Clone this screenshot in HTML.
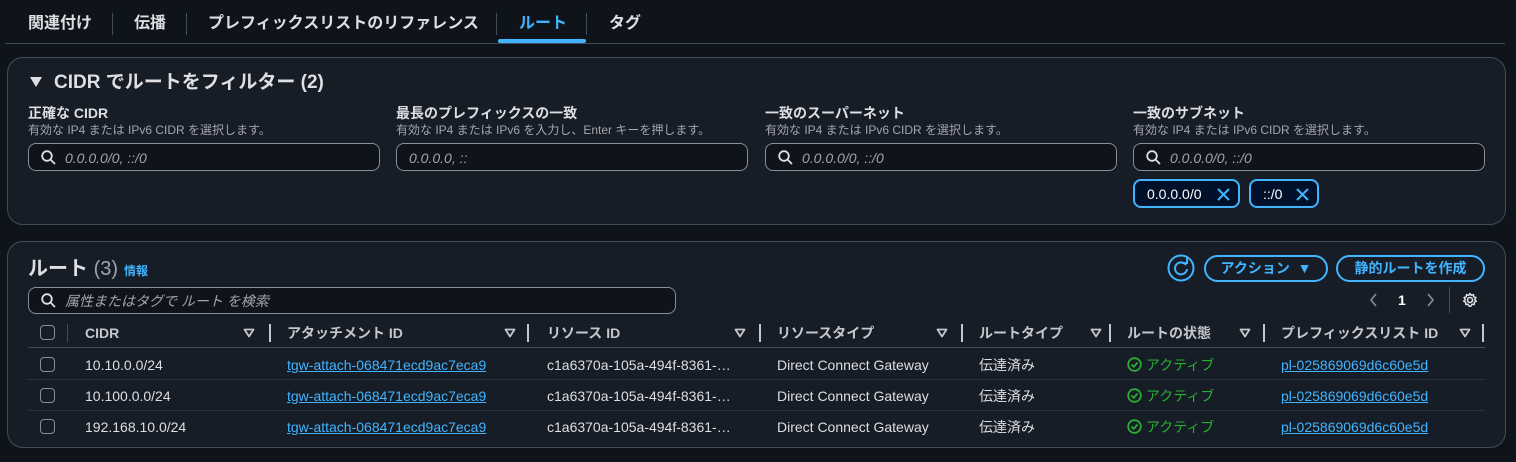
<!DOCTYPE html><html><head><meta charset="utf-8"><style>
*{box-sizing:border-box;margin:0;padding:0}
body{width:1516px;height:462px;background:#0f141a;font-family:"Liberation Sans","Noto Sans CJK JP",sans-serif;color:#dedee3;position:relative;overflow:hidden;font-size:14px;line-height:18px}
.a{position:absolute;white-space:nowrap}
.box{position:absolute;background:#161d26;border:1px solid #414d5c;border-radius:16px}
.lbl{font-weight:bold;font-size:14px;color:#dedee3}
.desc{font-size:12px;color:#a4a4ad;line-height:14px}
.inp{position:absolute;height:28px;border:1px solid #8c8c94;border-radius:8px;background:#0f141a;width:352px}
.ph{position:absolute;top:5px;font-style:italic;color:#a4a4ad;font-size:14px}
.tok{position:absolute;top:179px;height:29px;border:2px solid #42b4ff;border-radius:8px;background:#001129;color:#fff;font-size:14px;padding:4px 12px}
.btn{position:absolute;top:255px;height:27px;border:2px solid #42b4ff;border-radius:14px;color:#42b4ff;font-weight:bold;font-size:14px;text-align:center;line-height:22px}
.th{position:absolute;top:324px;font-weight:bold;color:#c6c6cd;font-size:14px}
.sep{position:absolute;top:324px;width:2px;height:18px;background:#c6c6cd}
.sort{position:absolute;top:328px}
.cb{position:absolute;left:40px;width:15px;height:15px;border:1.5px solid #8c8c94;border-radius:4px}
.td{position:absolute;font-size:14px;color:#dedee3}
.lk{color:#42b4ff;text-decoration:underline}
.ln{position:absolute;left:28px;width:1457px;height:1px;background:#414d5c}
.ok{color:#29ad32}
.tab{top:14px;font-size:16px;font-weight:bold;line-height:20px}
</style></head><body>
<div class="a tab" style="left:28px">関連付け</div>
<div class="a" style="left:112px;top:13px;width:1px;height:22px;background:#414d5c"></div>
<div class="a tab" style="left:134px">伝播</div>
<div class="a" style="left:186px;top:13px;width:1px;height:22px;background:#414d5c"></div>
<div class="a tab" style="left:208px">プレフィックスリストのリファレンス</div>
<div class="a" style="left:496px;top:13px;width:1px;height:22px;background:#414d5c"></div>
<div class="a tab" style="left:519px;color:#42b4ff">ルート</div>
<div class="a" style="left:498px;top:39px;width:88px;height:4px;border-radius:2px;background:#42b4ff"></div>
<div class="a" style="left:586px;top:13px;width:1px;height:22px;background:#414d5c"></div>
<div class="a tab" style="left:609px">タグ</div>
<div class="a" style="left:5px;top:43px;width:1500px;height:1px;background:#414d5c"></div>

<div class="box" style="left:7px;top:57px;width:1499px;height:168px"></div>
<svg class="a" style="left:30px;top:77px" width="12" height="11"><path d="M0 0H12L6 10Z" fill="#dedee3"/></svg>
<div class="a" style="left:54px;top:71px;font-size:19px;font-weight:bold;line-height:24px">CIDR でルートをフィルター (2)</div>

<div class="a lbl" style="left:28px;top:104px">正確な CIDR</div>
<div class="a desc" style="left:28px;top:123px">有効な IP4 または IPv6 CIDR を選択します。</div>
<div class="inp" style="left:28px;top:143px"><svg class="a" style="left:12px;top:6px" width="15" height="15" viewBox="0 0 15 15"><circle cx="6" cy="6" r="4.8" fill="none" stroke="#dedee3" stroke-width="1.8"/><path d="M9.5 9.5L14 14" stroke="#dedee3" stroke-width="1.8"/></svg><span class="ph" style="left:36px">0.0.0.0/0, ::/0</span></div>

<div class="a lbl" style="left:396px;top:104px">最長のプレフィックスの一致</div>
<div class="a desc" style="left:396px;top:123px">有効な IP4 または IPv6 を入力し、Enter キーを押します。</div>
<div class="inp" style="left:396px;top:143px"><span class="ph" style="left:12px">0.0.0.0, ::</span></div>

<div class="a lbl" style="left:765px;top:104px">一致のスーパーネット</div>
<div class="a desc" style="left:765px;top:123px">有効な IP4 または IPv6 CIDR を選択します。</div>
<div class="inp" style="left:765px;top:143px"><svg class="a" style="left:12px;top:6px" width="15" height="15" viewBox="0 0 15 15"><circle cx="6" cy="6" r="4.8" fill="none" stroke="#dedee3" stroke-width="1.8"/><path d="M9.5 9.5L14 14" stroke="#dedee3" stroke-width="1.8"/></svg><span class="ph" style="left:36px">0.0.0.0/0, ::/0</span></div>

<div class="a lbl" style="left:1133px;top:104px">一致のサブネット</div>
<div class="a desc" style="left:1133px;top:123px">有効な IP4 または IPv6 CIDR を選択します。</div>
<div class="inp" style="left:1133px;top:143px"><svg class="a" style="left:12px;top:6px" width="15" height="15" viewBox="0 0 15 15"><circle cx="6" cy="6" r="4.8" fill="none" stroke="#dedee3" stroke-width="1.8"/><path d="M9.5 9.5L14 14" stroke="#dedee3" stroke-width="1.8"/></svg><span class="ph" style="left:36px">0.0.0.0/0, ::/0</span></div>
<div class="tok" style="left:1133px;width:107px">0.0.0.0/0<svg class="a" style="left:82px;top:7px" width="13" height="13" viewBox="0 0 13 13"><path d="M1 1L12 12M12 1L1 12" stroke="#42b4ff" stroke-width="2"/></svg></div>
<div class="tok" style="left:1249px;width:70px">::/0<svg class="a" style="left:45px;top:7px" width="13" height="13" viewBox="0 0 13 13"><path d="M1 1L12 12M12 1L1 12" stroke="#42b4ff" stroke-width="2"/></svg></div>

<div class="box" style="left:7px;top:241px;width:1499px;height:207px"></div>
<div class="a" style="left:28px;top:256px;font-size:20px;font-weight:bold;line-height:26px">ルート <span style="color:#a4a4ad;font-weight:normal">(3)</span></div>
<div class="a" style="left:124px;top:262px;font-size:12px;font-weight:bold;color:#42b4ff">情報</div>
<div class="inp" style="left:28px;top:287px;width:648px;height:27px"><svg class="a" style="left:12px;top:5px" width="15" height="15" viewBox="0 0 15 15"><circle cx="6" cy="6" r="4.8" fill="none" stroke="#dedee3" stroke-width="1.8"/><path d="M9.5 9.5L14 14" stroke="#dedee3" stroke-width="1.8"/></svg><span class="ph" style="left:36px;top:4px">属性またはタグで ルート を検索</span></div>

<svg class="a" style="left:1167px;top:254px" width="28" height="28" viewBox="0 0 28 28"><circle cx="14" cy="14" r="12.5" fill="none" stroke="#42b4ff" stroke-width="2"/><path d="M19 11A6 6 0 1 0 20 15" fill="none" stroke="#42b4ff" stroke-width="2"/><path d="M15 9L20 9L20 4" fill="none" stroke="#42b4ff" stroke-width="2"/></svg>
<div class="btn" style="left:1204px;width:124px">アクション&nbsp;&nbsp;▼</div>
<div class="btn" style="left:1336px;width:149px">静的ルートを作成</div>
<svg class="a" style="left:1369px;top:293px" width="10" height="14"><path d="M7 1L2 7L7 13" fill="none" stroke="#8c8c94" stroke-width="1.6"/></svg>
<div class="a" style="left:1398px;top:291px;font-weight:bold;color:#fff">1</div>
<svg class="a" style="left:1425px;top:293px" width="10" height="14"><path d="M3 1L8 7L3 13" fill="none" stroke="#8c8c94" stroke-width="1.6"/></svg>
<div class="a" style="left:1449px;top:287px;width:1px;height:26px;background:#414d5c"></div>
<svg class="a" style="left:1462px;top:292px" width="16" height="16" viewBox="0 0 16 16"><circle cx="8" cy="8" r="2.5" fill="none" stroke="#dedee3" stroke-width="1.6"/><path d="M8 1.5L9.3 3.3L11.5 2.6L11.7 4.8L13.9 5.5L12.8 7.5L14.3 9.2L12.3 10.2L12.3 12.5L10 12.3L8.8 14.3L7.2 14.3L6 12.3L3.7 12.5L3.7 10.2L1.7 9.2L3.2 7.5L2.1 5.5L4.3 4.8L4.5 2.6L6.7 3.3Z" fill="none" stroke="#dedee3" stroke-width="1.5" stroke-linejoin="round"/></svg>

<div class="cb" style="top:325px"></div>
<div class="a" style="left:67px;top:324px;width:1px;height:18px;background:#414d5c"></div>
<div class="th" style="left:85px">CIDR</div>
<div class="th" style="left:287px">アタッチメント ID</div>
<div class="th" style="left:547px">リソース ID</div>
<div class="th" style="left:777px">リソースタイプ</div>
<div class="th" style="left:979px">ルートタイプ</div>
<div class="th" style="left:1127px">ルートの状態</div>
<div class="th" style="left:1281px">プレフィックスリスト ID</div>
<div class="sep" style="left:269px"></div><div class="sep" style="left:527px"></div><div class="sep" style="left:759px"></div><div class="sep" style="left:961px"></div><div class="sep" style="left:1109px"></div><div class="sep" style="left:1263px"></div><div class="sep" style="left:1482px"></div>
<svg class="sort" style="left:243px" width="12" height="10"><path d="M1.5 1.5H10.5L6 8.5Z" fill="none" stroke="#c6c6cd" stroke-width="1.8" stroke-linejoin="round"/></svg>
<svg class="sort" style="left:504px" width="12" height="10"><path d="M1.5 1.5H10.5L6 8.5Z" fill="none" stroke="#c6c6cd" stroke-width="1.8" stroke-linejoin="round"/></svg>
<svg class="sort" style="left:734px" width="12" height="10"><path d="M1.5 1.5H10.5L6 8.5Z" fill="none" stroke="#c6c6cd" stroke-width="1.8" stroke-linejoin="round"/></svg>
<svg class="sort" style="left:936px" width="12" height="10"><path d="M1.5 1.5H10.5L6 8.5Z" fill="none" stroke="#c6c6cd" stroke-width="1.8" stroke-linejoin="round"/></svg>
<svg class="sort" style="left:1090px" width="12" height="10"><path d="M1.5 1.5H10.5L6 8.5Z" fill="none" stroke="#c6c6cd" stroke-width="1.8" stroke-linejoin="round"/></svg>
<svg class="sort" style="left:1239px" width="12" height="10"><path d="M1.5 1.5H10.5L6 8.5Z" fill="none" stroke="#c6c6cd" stroke-width="1.8" stroke-linejoin="round"/></svg>
<svg class="sort" style="left:1459px" width="12" height="10"><path d="M1.5 1.5H10.5L6 8.5Z" fill="none" stroke="#c6c6cd" stroke-width="1.8" stroke-linejoin="round"/></svg>
<div class="ln" style="top:347px"></div>

<div class="cb" style="top:357px"></div>
<div class="td" style="left:85px;top:356px">10.10.0.0/24</div>
<div class="td lk" style="left:287px;top:356px">tgw-attach-068471ecd9ac7eca9</div>
<div class="td" style="left:547px;top:356px">c1a6370a-105a-494f-8361-…</div>
<div class="td" style="left:777px;top:356px">Direct Connect Gateway</div>
<div class="td" style="left:979px;top:356px">伝達済み</div>
<div class="td ok" style="left:1127px;top:356px"><svg width="15" height="15" style="vertical-align:-2px"><circle cx="7.5" cy="7.5" r="6.3" fill="none" stroke="#29ad32" stroke-width="1.8"/><path d="M4.5 7.5L6.8 9.8L10.5 5.5" fill="none" stroke="#29ad32" stroke-width="1.8"/></svg> アクティブ</div>
<div class="td lk" style="left:1281px;top:356px">pl-025869069d6c60e5d</div>
<div class="ln" style="top:379px;background:#2a323d"></div>

<div class="cb" style="top:388px"></div>
<div class="td" style="left:85px;top:387px">10.100.0.0/24</div>
<div class="td lk" style="left:287px;top:387px">tgw-attach-068471ecd9ac7eca9</div>
<div class="td" style="left:547px;top:387px">c1a6370a-105a-494f-8361-…</div>
<div class="td" style="left:777px;top:387px">Direct Connect Gateway</div>
<div class="td" style="left:979px;top:387px">伝達済み</div>
<div class="td ok" style="left:1127px;top:387px"><svg width="15" height="15" style="vertical-align:-2px"><circle cx="7.5" cy="7.5" r="6.3" fill="none" stroke="#29ad32" stroke-width="1.8"/><path d="M4.5 7.5L6.8 9.8L10.5 5.5" fill="none" stroke="#29ad32" stroke-width="1.8"/></svg> アクティブ</div>
<div class="td lk" style="left:1281px;top:387px">pl-025869069d6c60e5d</div>
<div class="ln" style="top:410px;background:#2a323d"></div>

<div class="cb" style="top:419px"></div>
<div class="td" style="left:85px;top:418px">192.168.10.0/24</div>
<div class="td lk" style="left:287px;top:418px">tgw-attach-068471ecd9ac7eca9</div>
<div class="td" style="left:547px;top:418px">c1a6370a-105a-494f-8361-…</div>
<div class="td" style="left:777px;top:418px">Direct Connect Gateway</div>
<div class="td" style="left:979px;top:418px">伝達済み</div>
<div class="td ok" style="left:1127px;top:418px"><svg width="15" height="15" style="vertical-align:-2px"><circle cx="7.5" cy="7.5" r="6.3" fill="none" stroke="#29ad32" stroke-width="1.8"/><path d="M4.5 7.5L6.8 9.8L10.5 5.5" fill="none" stroke="#29ad32" stroke-width="1.8"/></svg> アクティブ</div>
<div class="td lk" style="left:1281px;top:418px">pl-025869069d6c60e5d</div>
</body></html>
